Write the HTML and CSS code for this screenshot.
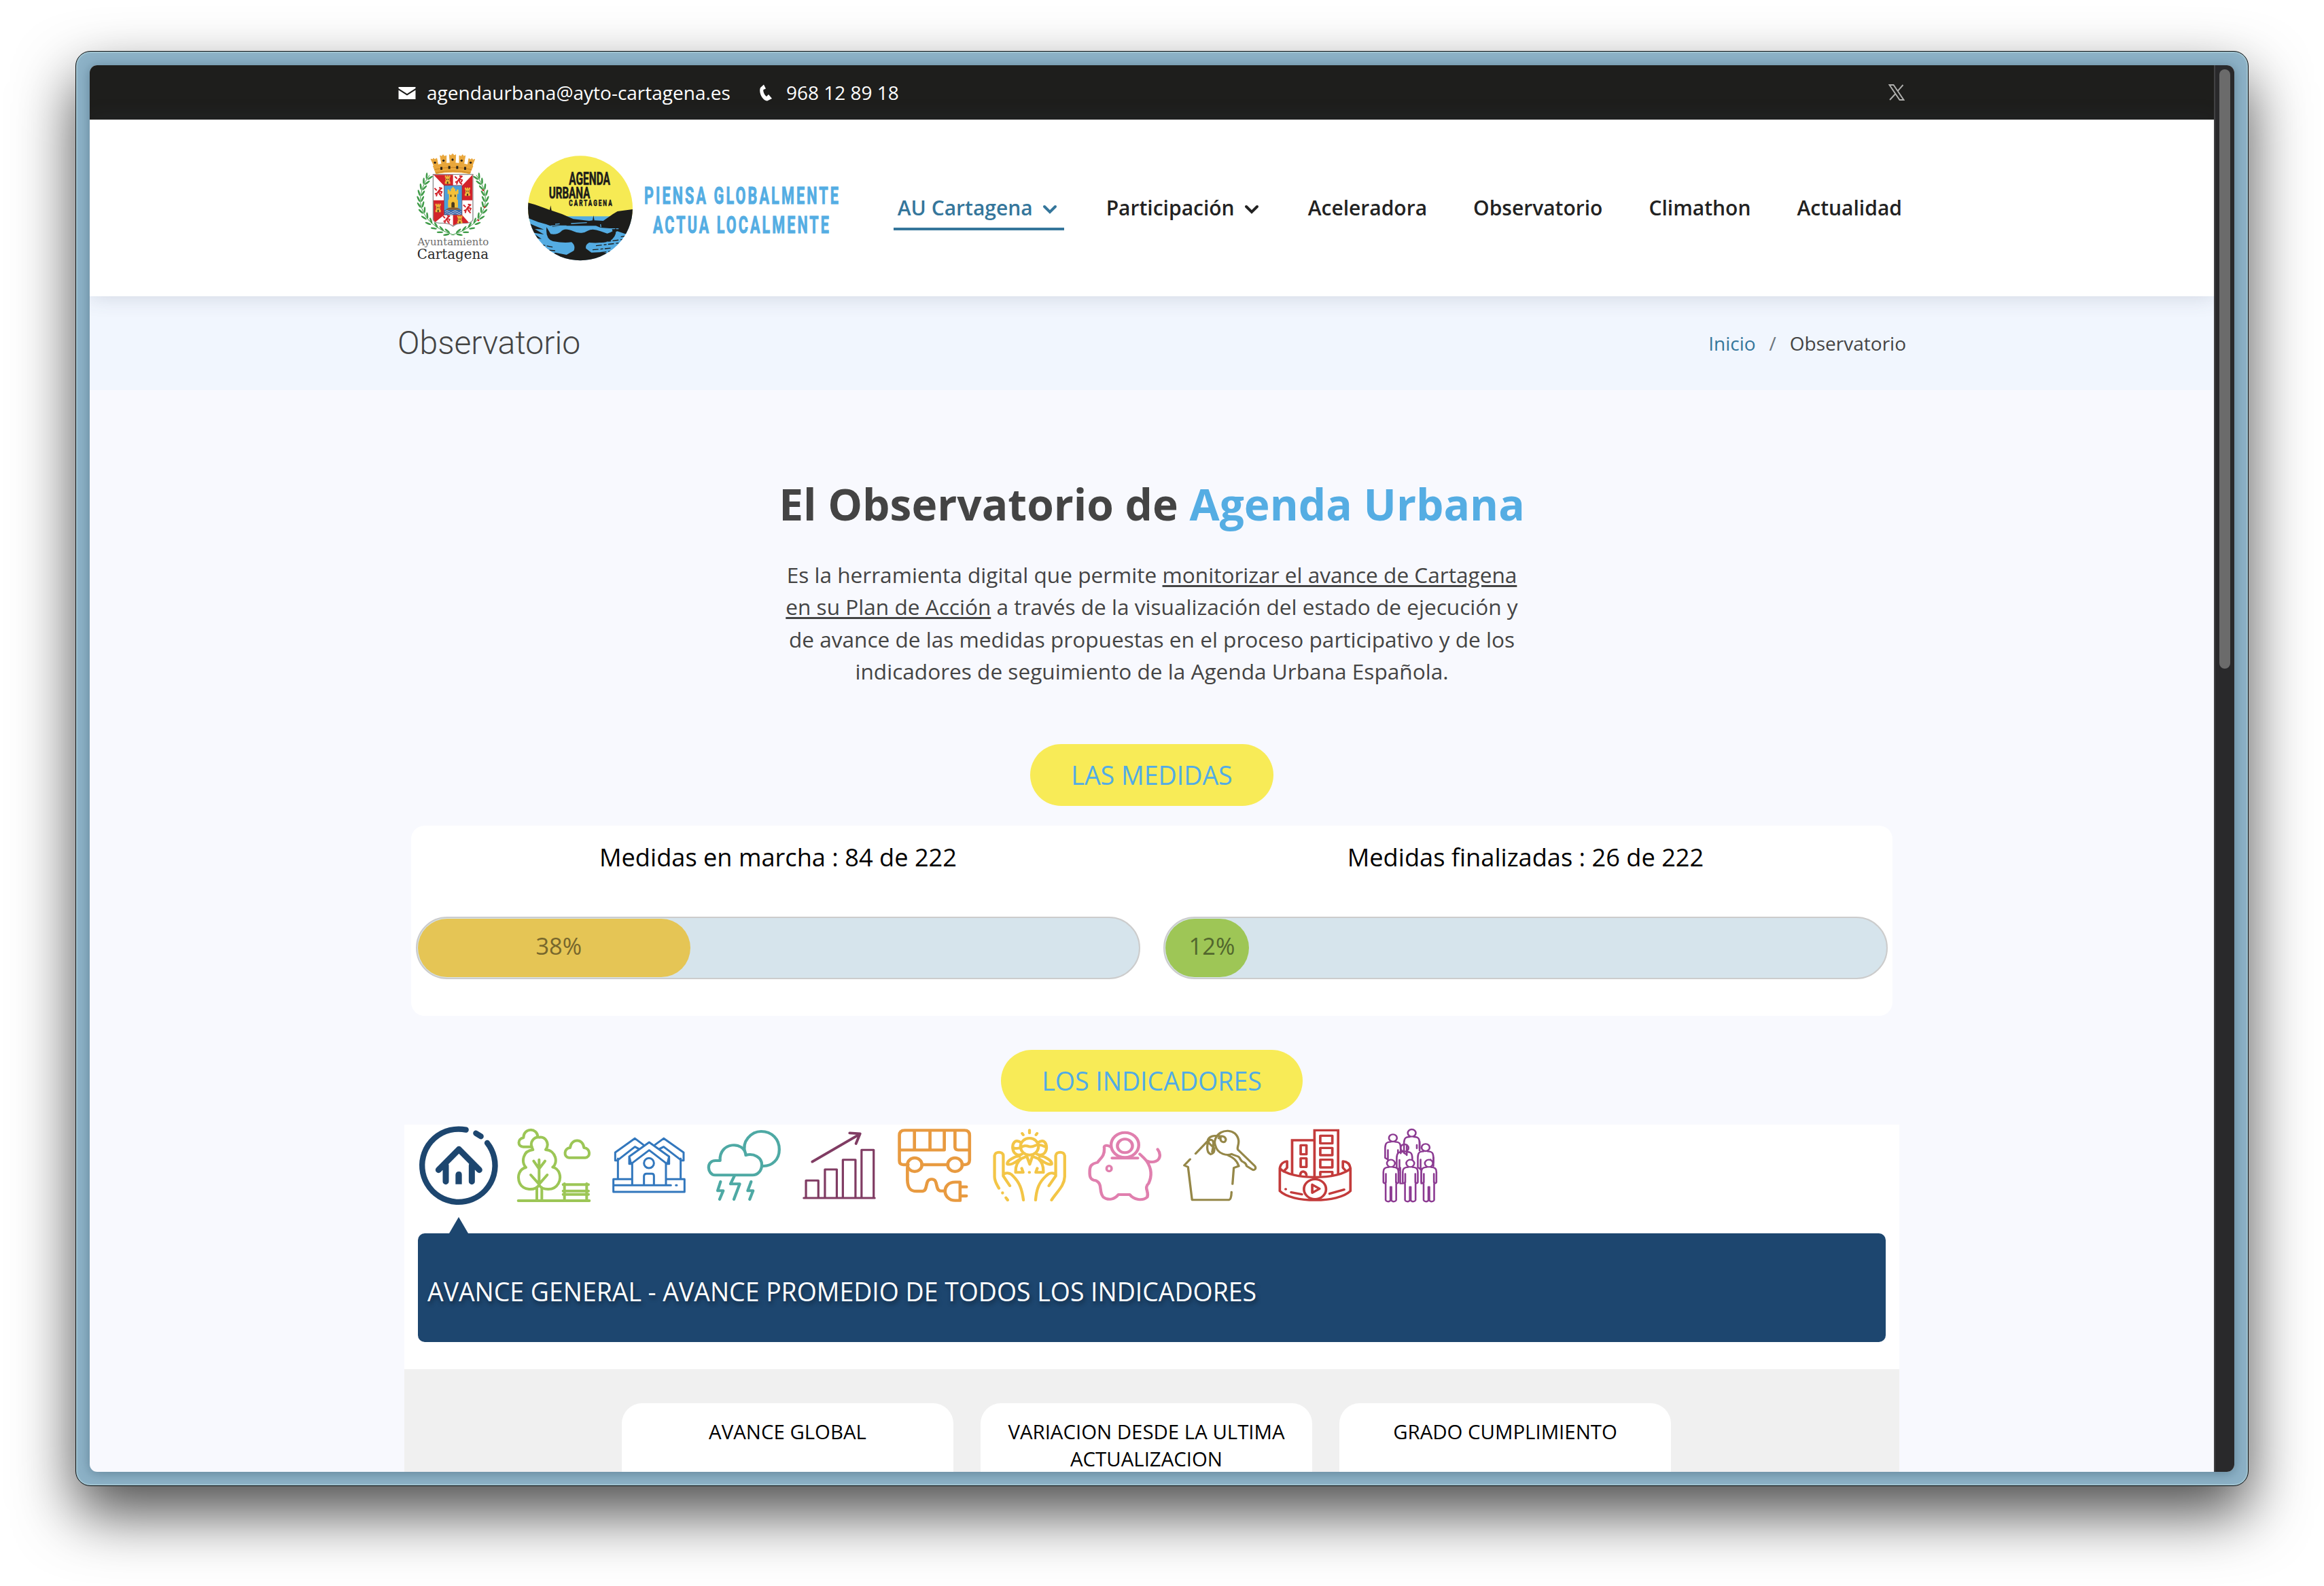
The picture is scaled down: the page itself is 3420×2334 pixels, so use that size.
FILE: index.html
```html
<!DOCTYPE html>
<html lang="es">
<head>
<meta charset="utf-8">
<title>Observatorio - Agenda Urbana Cartagena</title>
<link rel="stylesheet" href="styles.css">
</head>
<body>
<div class="window">
<div class="viewport">
<div class="page">

  <div class="topbar">
    <div class="container topbar-row">
      <svg class="ico-mail" viewBox="0 0 26 18"><path d="M0.500 0H25.500V2L13 10 0.500 2ZM0.500 4.500V18H25.500V4.500L13 12.500Z" fill="#fff"/></svg>
      <span class="mail">agendaurbana@ayto-cartagena.es</span>
      <svg class="ico-phone" viewBox="0 0 20 25"><path d="M2 5C-1 12 5 24 12 24.500L19 21 14 15 11 18C8 16 5.500 10 6.500 8L10 6.500 7 0.500Z" fill="#fff"/></svg>
      <span>968 12 89 18</span>
      <svg class="ico-x" viewBox="0 0 24 24"><path fill="none" stroke="#b0b0ae" stroke-width="1.900" d="M1.500 1H7.500L22.500 23H16.500ZM21.500 1 13.600 10M10.400 14 2 23"/></svg>
    </div>
  </div>

  <header class="header">
    <div class="container header-row">
      <svg class="crest" viewBox="36 30 330 490">
        <defs>
          <g id="leaf"><ellipse cx="-7" cy="-6" rx="4" ry="14" transform="rotate(-25)"/><ellipse cx="7" cy="-6" rx="4" ry="14" transform="rotate(25)"/></g>
          <g id="castle"><path d="M-12 18V8H-9V-10H-12V-19H-6V-14H-3V-19H3V-14H6V-19H12V-10H9V8H12V18Z" fill="#f0b63c"/><path d="M-3 18V8H3V18ZM-5-5H-2V1H-5ZM2-5H5V1H2Z" fill="#4a3b1e"/></g>
          <g id="lion" fill="none" stroke="#d2232a" stroke-width="6" stroke-linejoin="round"><path d="M-16 10-6 6-10 20M-6 6 2-6 14-16 2-18M0-4 15 0 10 10M0-4 4 10 14 20M-8-6-18-16"/></g>
        </defs>
        <g fill="#e9a73c" stroke="#e9a73c" stroke-width="3" stroke-linejoin="round">
          <path d="M125 122 112 88Q198 60 288 88L274 122Q200 108 125 122Z"/>
          <path d="M116 88 102 57 110 60 113 54 120 59 128 54 134 84ZM150 79 143 42 150 46 156 38 162 46 170 42 170 76ZM187 75 184 38 191 42 198 34 206 42 212 38 210 75ZM228 76 228 42 236 46 242 38 248 46 254 42 248 79ZM265 84 270 55 278 60 284 55 288 62 296 58 285 88Z"/>
        </g>
        <path d="M118 104Q200 84 282 104M122 118Q200 102 278 118" fill="none" stroke="#c27a1c" stroke-width="2.500"/>
        <g fill="#2b2418"><circle cx="120" cy="73" r="5"/><circle cx="158" cy="64" r="5"/><circle cx="198" cy="60" r="5"/><circle cx="238" cy="64" r="5"/><circle cx="278" cy="73" r="5"/><rect x="144" y="92" width="9" height="13"/><rect x="179" y="88" width="9" height="13"/><rect x="214" y="88" width="9" height="13"/><rect x="249" y="92" width="9" height="13"/></g>
        <g fill="#3f9b48" stroke="none">
          <g id="branch">
            <path d="M205 394Q70 350 56 250 50 190 96 128" fill="none" stroke="#3f9b48" stroke-width="3"/>
            <use href="#leaf" transform="translate(175 384) rotate(-75)"/><use href="#leaf" transform="translate(148 374) rotate(-65)"/><use href="#leaf" transform="translate(122 358) rotate(-55)"/><use href="#leaf" transform="translate(98 338) rotate(-45)"/><use href="#leaf" transform="translate(80 314) rotate(-32)"/><use href="#leaf" transform="translate(67 288) rotate(-22)"/><use href="#leaf" transform="translate(59 262) rotate(-10)"/><use href="#leaf" transform="translate(56 236)"/><use href="#leaf" transform="translate(58 210) rotate(8)"/><use href="#leaf" transform="translate(65 184) rotate(18)"/><use href="#leaf" transform="translate(77 160) rotate(28)"/><use href="#leaf" transform="translate(90 138) rotate(30)"/>
          </g>
          <use href="#branch" transform="translate(399 0) scale(-1 1)"/>
        </g>
        <g fill="#d2232a"><circle cx="333" cy="195" r="4"/><circle cx="340" cy="270" r="4"/><circle cx="312" cy="328" r="4"/></g>
        <path d="M112 125H288V325Q285 338 260 341H240Q215 342 200 355 185 342 160 341H140Q115 338 112 325Z" fill="#fff" stroke="#8d8a8c" stroke-width="4"/>
        <g fill="#d2232a">
          <path d="M114 127H200V175H160ZM286 127V240H240V175ZM114 240H160V305L122 336Q114 330 114 325ZM200 304H240L270 338Q250 342 240 340 215 342 200 352Z"/>
        </g>
        <use href="#castle" transform="translate(176 149)"/><use href="#castle" transform="translate(264 202)"/><use href="#castle" transform="translate(134 274)"/><use href="#castle" transform="translate(230 325) scale(.95)"/>
        <use href="#lion" transform="translate(226 150)"/><use href="#lion" transform="translate(136 202)"/><use href="#lion" transform="translate(264 276)"/><use href="#lion" transform="translate(172 324) scale(.9)"/>
        <rect x="160" y="174" width="80" height="130" fill="#4aa0da" stroke="#8b2a30" stroke-width="2"/>
        <path d="M162 284H238V302H162Z" fill="#2456a0"/><path d="M164 290Q173 283 182 290T200 290 218 290 236 290M164 298Q173 291 182 298T200 298 218 298 236 298" fill="none" stroke="#fff" stroke-width="2.500"/>
        <path d="M166 282Q200 258 236 282Z" fill="#8a5a34"/>
        <path d="M178 272V240L182 235V212H176V192H184V199H190V188H196V182H204V188H210V199H216V192H224V212H218V235L222 240V272Z" fill="#f4c038"/><path d="M193 272V252Q200 243 207 252V272ZM188 215H193V225H188ZM207 215H212V225H207Z" fill="#4a3b1e"/>
        <text x="43" y="439" font-family="'DejaVu Serif',serif" font-size="46" fill="#6c6c6c" textLength="315" lengthAdjust="spacingAndGlyphs">Ayuntamiento</text>
        <text x="41" y="499" font-family="'DejaVu Serif',serif" font-size="63" fill="#2a2a2a" textLength="317" lengthAdjust="spacingAndGlyphs">Cartagena</text>
      </svg>

      <svg class="roundel" viewBox="524 36 474 474">
        <clipPath id="disc"><circle cx="761" cy="274" r="231"/></clipPath>
        <g clip-path="url(#disc)">
          <rect x="524" y="36" width="474" height="300" fill="#f6ea54"/>
          <rect x="524" y="310" width="474" height="200" fill="#54ace2"/>
          <path d="M524 248 560 258 600 272 626 282 630 262 634 284 680 300 730 322 800 330 815 328 819 306 823 328 862 330 905 300 925 288 998 278V380L960 388 925 376 905 382 900 364 850 360 830 352H700L640 356 610 345 575 335 524 315Z" fill="#1d1d1b"/>
          <path d="M524 335 560 352 600 368 560 366 600 390 550 382 590 410 524 400Z" fill="#1d1d1b"/>
          <path d="M630 352H700M720 342 790 338M850 345 852 358M880 365H930M650 345 670 343" stroke="#54ace2" stroke-width="4"/>
          <path d="M612 358Q606 410 640 420 690 430 722 424 742 440 732 462L700 480 650 470 620 488 680 510H840L900 480 860 468 810 470 786 452Q782 436 800 426 850 430 890 420 924 400 918 360 910 378 880 386L850 376Q815 362 793 374 777 384 765 383 745 384 730 376 690 358 675 378 660 392 630 388Z" fill="#1d1d1b"/>
          <path d="M560 430 640 446M570 455 650 462M830 440 930 428M815 458 900 450M850 425 950 412M590 472 640 478M850 470 900 464M940 400 980 395" stroke="#1d1d1b" stroke-width="4" stroke-dasharray="26 9 12 7"/>
        </g>
        <g font-family="Roboto,sans-serif" font-weight="700" fill="#1d1d1b" stroke="#1d1d1b" stroke-width="2">
          <text x="711" y="171" font-size="76" textLength="182" lengthAdjust="spacingAndGlyphs">AGENDA</text>
          <text x="622" y="232" font-size="74" textLength="182" lengthAdjust="spacingAndGlyphs">URBANA</text>
          <text x="711" y="264" font-size="36" letter-spacing="9" textLength="196" lengthAdjust="spacingAndGlyphs">CARTAGENA</text>
        </g>
      </svg>

      <svg class="slogan" viewBox="0 0 300 80">
        <g font-family="Roboto,sans-serif" font-weight="700" font-size="35" fill="#54ade3" stroke="#54ade3" stroke-width="1" letter-spacing="5">
          <text x="1" y="31" textLength="289" lengthAdjust="spacingAndGlyphs">PIENSA GLOBALMENTE</text>
          <text x="14" y="74" textLength="262" lengthAdjust="spacingAndGlyphs">ACTUA LOCALMENTE</text>
        </g>
      </svg>

      <nav class="nav">
        <a class="active">AU Cartagena<svg class="chev" viewBox="0 0 20 12"><path d="M2 2 10 10 18 2"/></svg></a>
        <a>Participación<svg class="chev" viewBox="0 0 20 12"><path d="M2 2 10 10 18 2"/></svg></a>
        <a>Aceleradora</a>
        <a>Observatorio</a>
        <a>Climathon</a>
        <a>Actualidad</a>
      </nav>
    </div>
  </header>

  <section class="crumbs">
    <div class="container crumbs-row">
      <h2>Observatorio</h2>
      <div class="trail"><a>Inicio</a><i>/</i><span>Observatorio</span></div>
    </div>
  </section>

  <main class="main">
    <h1>El Observatorio de <span>Agenda Urbana</span></h1>
    <p class="lead">Es la herramienta digital que permite <u>monitorizar el avance de Cartagena</u><br><u>en su Plan de Acción</u> a través de la visualización del estado de ejecución y<br>de avance de las medidas propuestas en el proceso participativo y de los<br>indicadores de seguimiento de la Agenda Urbana Española.</p>

    <div class="pill pill-first">LAS MEDIDAS</div>

    <div class="measures">
      <div class="measure">
        <h3>Medidas en marcha : 84 de 222</h3>
        <div class="bar"><div class="fill fill-yellow" style="width:37.8%">38%</div></div>
      </div>
      <div class="measure">
        <h3>Medidas finalizadas : 26 de 222</h3>
        <div class="bar"><div class="fill fill-green" style="width:11.6%">12%</div></div>
      </div>
    </div>

    <div class="pill pill-second">LOS INDICADORES</div>

    <div class="panel">
      <div class="icons">
        <svg viewBox="45 45 360 360" stroke="#1d466f" stroke-width="25">
          <path d="M257 68A161 161 0 1 0 351 126M301 83 323 97"/>
          <path d="M136 245 226 154 316 245M168 225V296M283 225V296" stroke-width="27"/>
          <path d="M211 308V267Q212 252 226 252 239 252 239 267V308Z" fill="#1d466f" stroke="none"/>
        </svg>
        <svg viewBox="465 45 360 360" stroke="#9cc656" stroke-width="12">
          <path d="M488 381H802M570 381V325M592 381V325M548 143H510C485 143 483 108 511 103 511 58 572 58 574 98"/>
          <path d="M580 312C560 340 510 334 495 305 480 270 495 240 522 234 500 210 508 160 553 156 532 120 560 98 582 101 610 98 628 130 609 156 655 158 665 215 640 233 672 240 680 280 665 305 645 340 595 335 580 312Z"/>
          <path d="M580 312V200M580 240 556 206M580 240 606 206M580 308 543 267M580 308 616 267"/>
          <path d="M712 191C688 190 688 150 717 147 722 105 774 105 778 147 808 150 808 190 784 191Z"/>
          <path d="M692 306V378M790 306V378M686 310H798M686 338H798M686 353H798"/>
        </svg>
        <svg viewBox="885 45 360 360" stroke="#3277bd" stroke-width="9">
          <path d="M908 286H989M1142 286H1222V342H908V286M908 313H1162M1184 313H1188M928 282V195M1205 282V195M991 310V215M1140 310V215"/>
          <path d="M978 218V186L1066 123 1154 186V218H1144L1066 158 987 218ZM916 203V168L1003 106 1040 134M916 203H926L1003 143 1020 152M1218 203V168L1130 106 1092 134M1218 203H1208L1130 143 1112 152M978 186 984 210M1154 186 1148 210"/>
          <circle cx="1065" cy="215" r="22"/><path d="M1043 310V272Q1044 262 1054 262H1078Q1087 262 1087 272V310"/>
        </svg>
        <svg viewBox="42 45 336 360" preserveAspectRatio="none" stroke="#4ea9a4" stroke-width="12">
          <path d="M90 268C58 266 52 204 92 204H111C106 120 212 115 217 180 250 170 283 190 283 222 283 250 265 268 245 268ZM215 170C198 120 240 75 280 75 325 75 355 110 355 155 355 200 325 228 290 228"/>
          <path d="M170 272 154 307H192L168 375M113 297 101 337H124L109 375M239 297 225 337H247L233 375" stroke-width="12"/>
        </svg>
        <svg viewBox="434 45 336 360" preserveAspectRatio="none" stroke="#803c63" stroke-width="9" stroke-linejoin="miter">
          <path d="M456 369H748M465 366V292H516V366M543 366V243H592V366M617 366V200H669V366M694 366V157H744V366"/><path d="M491 209 685 88M645 82 688 85 671 129" stroke-width="11"/>
        </svg>
        <svg viewBox="826 45 336 360" preserveAspectRatio="none" stroke="#e89a40" stroke-width="13">
          <path d="M886 222H866Q850 222 850 205V92Q850 70 872 70H1118Q1139 70 1139 92V202Q1139 222 1118 222H1108M942 222H1050M850 157H1035V74M912 74V155M976 74V155M1079 74V145Q1080 157 1092 157H1136"/>
          <circle cx="913" cy="222" r="30"/><circle cx="1079" cy="222" r="30"/>
          <path d="M883 235V290C884 325 895 339 920 339H945C970 337 952 285 983 286 1012 285 995 335 1020 338H1035M1100 299V380M1100 299H1080C1050 299 1038 320 1038 339 1038 360 1055 380 1080 380H1100M1105 320H1126M1105 360H1126"/>
        </svg>
        <svg viewBox="1218 45 336 360" preserveAspectRatio="none" stroke="#f3c546" stroke-width="12">
          <path d="M1305 315 1278 272V182C1277 162 1244 162 1242 182V275C1242 295 1252 310 1260 326M1278 265C1290 255 1308 258 1318 272 1345 300 1355 330 1361 378M1275 346V347M1289 368 1296 378M1466 315 1494 272V182C1496 162 1529 162 1531 182V275C1530 315 1500 340 1477 378M1494 265C1482 255 1466 258 1454 272 1425 300 1415 330 1411 378"/>
          <circle cx="1386" cy="142" r="37"/><path d="M1352 125C1325 105 1315 130 1317 150 1320 180 1345 185 1360 172M1420 125C1448 105 1457 130 1456 150 1452 180 1428 185 1412 172M1322 148C1350 160 1355 128 1385 142 1410 148 1408 122 1450 142"/>
          <path d="M1345 185C1330 182 1290 205 1295 220 1315 225 1328 208 1350 196L1375 185 1387 220 1398 185 1424 196C1445 208 1460 225 1477 220 1482 205 1445 182 1428 185M1350 198C1335 210 1328 225 1329 256H1360L1354 238M1424 198C1438 210 1444 225 1443 256H1412L1418 238M1385 256H1386M1386 70V82M1356 84 1360 90M1417 84 1413 90"/>
        </svg>
        <svg viewBox="67.600 45 324.400 360" preserveAspectRatio="none" stroke="#e07fae" stroke-width="12">
          <circle cx="231" cy="135" r="55"/><circle cx="231" cy="139" r="30"/>
          <path d="M180 193H282M172 142C160 135 145 135 149 150 150 185 135 192 122 212 100 218 91 225 91 250 90 275 93 290 115 292 145 308 125 340 145 365 165 382 190 375 205 354H250C265 375 300 385 320 365 328 340 305 325 325 305 340 270 335 235 318 207 310 195 300 185 290 175M318 205C345 218 370 205 370 180 370 165 365 160 361 154"/>
          <ellipse cx="168" cy="239" rx="10" ry="12" stroke-width="10"/>
        </svg>
        <svg viewBox="446 45 324.400 360" preserveAspectRatio="none" stroke="#958748" stroke-width="9">
          <path d="M512 173 560 118C562 95 590 90 618 96M490 198 467 225 482 232 498 377H645Q654 375 655 343M659 307 664 236 684 228C675 200 660 190 640 180M592 105C610 60 675 60 683 115 685 135 676 145 680 155L748 228C755 240 745 250 736 242L715 228C710 205 700 218 690 198 685 180 670 185 655 175 640 182 600 180 590 135 585 120 590 112 592 105M612 100C605 125 635 130 632 108 628 95 612 92 604 105M562 118C555 150 560 170 572 176 590 170 590 150 578 140 568 130 555 120 570 112 590 110 582 145 578 165"/>
        </svg>
        <svg viewBox="824.400 45 324.400 360" preserveAspectRatio="none" stroke="#c33b3b" stroke-width="10">
          <path d="M896 262V114H985M985 275V70H1079V262" stroke-linejoin="miter"/>
          <path d="M847 238C890 290 1085 290 1128 238V338C1080 392 895 392 847 338ZM847 238C850 215 865 208 876 207V235L862 252M1128 238C1125 215 1112 208 1098 207V235L1112 252"/>
          <path d="M1008 94H1056V128H1008ZM1008 148H1056V180H1008ZM1008 200H1056V234H1008ZM1008 268V254H1056V268M930 136H953V176H930ZM930 194H953V232H930ZM928 268Q930 252 940 252 951 254 953 268M870 330H871M892 344 935 353M1103 332 1045 350"/>
          <circle cx="987" cy="330" r="44" fill="#fff"/><path d="M976 310V346L1005 328Z"/>
        </svg>
        <svg viewBox="1202.800 45 324.400 360" preserveAspectRatio="none" stroke="#8c3b92" stroke-width="7">
          <defs><g id="person"><circle cx="0" cy="-74" r="16"/><path d="M-8-57C-26-56-30-50-30-35V10C-28 16-21 14-21 8V88C-18 97-4 97-2 88V30M8-57C26-56 30-50 30-35V10C28 16 21 14 21 8V88C18 97 4 97 2 88V30M-20 10V-28M20 10V-28"/></g>
          <g id="bust"><circle cx="0" cy="-88" r="16"/><path d="M-8-71C-28-70-30-62-31-45V0L-22 6M8-71C28-70 30-62 31-45V-20M-20 10V-35M20-20V-35"/></g></defs>
          <use href="#bust" x="1297" y="192"/><use href="#bust" x="1372" y="170"/><use href="#bust" x="1343" y="236"/><use href="#bust" x="1427" y="234"/>
          <path d="M1403 120V160M1326 235V305H1335M1410 240V305M1458 190V228"/>
          <g fill="#fff"><use href="#person" x="1289" y="290"/><use href="#person" x="1366" y="290"/><use href="#person" x="1440" y="290"/></g>
        </svg>
      </div>
      <div class="arrow"></div>
      <div class="banner"><span><b>AVANCE GENERAL - </b>AVANCE PROMEDIO DE TODOS LOS INDICADORES</span></div>
    </div>

    <div class="stats">
      <div class="stat">AVANCE GLOBAL</div>
      <div class="stat">VARIACION DESDE LA ULTIMA ACTUALIZACION</div>
      <div class="stat">GRADO CUMPLIMIENTO</div>
    </div>
  </main>
</div>
<div class="scrollbar"><div class="thumb"></div></div>
</div>
</div>
</body>
</html>
```
FILE: styles.css
```css
* { box-sizing: border-box; }
body { margin: 0; padding: 75px 111px; width: 3420px; height: 2334px; overflow: hidden; background: #fff; font-family: "Open Sans", sans-serif; color: #444; }
h1, h2, h3, p { margin: 0; }
.window { width: 3198px; height: 2112px; padding: 20px; border: 1px solid #0c0f10; border-radius: 22px; background: #8db2c7; box-shadow: inset 0 0 0 2px #a0c3d0, 0 40px 88px rgba(0,0,0,.7); }
.viewport { display: flex; height: 2070px; border-radius: 11px; overflow: hidden; box-shadow: 0 2px 18px rgba(30,60,80,.4); background: #f8f9fe; }
.page { width: 3126px; height: 2070px; overflow: hidden; }
.container { width: 2280px; margin: 0 auto; padding: 0 30px; }

.scrollbar { width: 30px; padding: 6px 6px 0; background: #29292b; border-left: 2px solid #414143; }
.thumb { width: 16px; height: 882px; border-radius: 8px; background: #6b6b6b; }

.topbar { height: 80px; background: #1e1e1c; color: #fff; font-size: 28px; }
.topbar-row { display: flex; align-items: center; height: 80px; }
.ico-mail { width: 26px; height: 18px; margin: 2px 16px 0 1px; }
.ico-phone { width: 20px; height: 25px; margin: 1px 20px 0 42px; }
.ico-x { width: 24px; height: 24px; margin-left: auto; margin-right: 2px; }

.header { position: relative; height: 260px; background: #fff; box-shadow: 0 0 30px rgba(60,70,90,.19); }
.header-row { display: flex; align-items: center; height: 260px; }
.header svg { overflow: visible; }
.crest { width: 110px; height: 163px; margin-left: 27px; }
.roundel { width: 158px; height: 158px; margin-left: 53px; }
.slogan { width: 300px; height: 80px; margin: 6px 0 0 14px; }
.nav { display: flex; margin-left: auto; gap: 56px; font-size: 30px; font-weight: 600; color: #222; }
.nav a { display: flex; align-items: center; height: 66px; padding: 3px 6px 0; border-bottom: 4px solid transparent; white-space: nowrap; }
.nav .active { color: #35769b; border-color: #35769b; }
.chev { width: 20px; height: 12px; margin: 4px 5px 0 15px; fill: none; stroke: currentColor; stroke-width: 4; stroke-linecap: round; }

.crumbs { height: 138px; background: #f1f6fe; }
.crumbs-row { display: flex; align-items: center; justify-content: space-between; height: 136px; }
.crumbs h2 { font: 300 48px Roboto, sans-serif; }
.trail { display: flex; font-size: 28px; padding-top: 2px; }
.trail a { color: #35769b; }
.trail i { margin: 0 20px; font-style: normal; color: #6c757d; }

.main { display: flex; flex-direction: column; align-items: center; }
h1 { margin-top: 124px; height: 88px; line-height: 88px; font-size: 64px; font-weight: 700; white-space: nowrap; }
h1 span { color: #55ade3; }
.lead { margin-top: 36px; height: 191px; font-size: 31.600px; line-height: 47.300px; text-align: center; white-space: nowrap; }
.lead u { text-decoration-thickness: 3px; text-underline-offset: 3px; }
.pill { height: 91px; line-height: 92px; padding: 0 60px; border-radius: 46px; background: #f8eb57; color: #51abe6; font-size: 37.500px; white-space: nowrap; }
.pill-first { margin-top: 82px; }
.measures { display: flex; justify-content: space-between; width: 2180px; height: 280px; margin-top: 29px; padding: 0 7px; border-radius: 20px; background: #fff; }
.measure { width: 1066px; }
h3 { height: 134px; padding-top: 21px; line-height: 50px; text-align: center; font-size: 36.200px; font-weight: 400; color: #000; }
.bar { height: 92px; padding: 1px; border: 2px solid #ccc; border-radius: 46px; background: #d6e4ec; }
.fill { height: 86px; padding-left: 14px; border-radius: 43px; text-align: center; line-height: 80px; font-size: 34.400px; }
.fill-yellow { background: #e5c555; color: #77672c; }
.fill-green { background: #9ec656; color: #52672d; }
.pill-second { margin-top: 50px; }
.panel { width: 2200px; height: 360px; margin-top: 19px; padding: 0 20px; background: #fff; }
.icons { display: flex; gap: 20px; height: 136px; }
.icons svg { width: 120px; height: 120px; fill: none; stroke-linecap: round; stroke-linejoin: round; }
.arrow { width: 28px; height: 24px; margin-left: 46px; background: #1d466f; clip-path: polygon(50% 0, 100% 100%, 0 100%); }
.banner { height: 160px; padding: 0 14px; border-radius: 10px; background: #1d466f; color: #fff; font-size: 37.400px; line-height: 171px; text-shadow: 2px 4px 6px rgba(0,0,0,.4); white-space: nowrap; }
.banner b { font-weight: 500; }
.stats { display: flex; justify-content: center; gap: 40px; width: 2200px; height: 151px; padding: 50px 16px 0 0; background: #f0f0f0; }
.stat { width: 488px; padding: 22px 30px 0; border-radius: 30px 30px 0 0; background: #fff; color: #000; text-align: center; font-size: 29.400px; line-height: 40px; }
```
